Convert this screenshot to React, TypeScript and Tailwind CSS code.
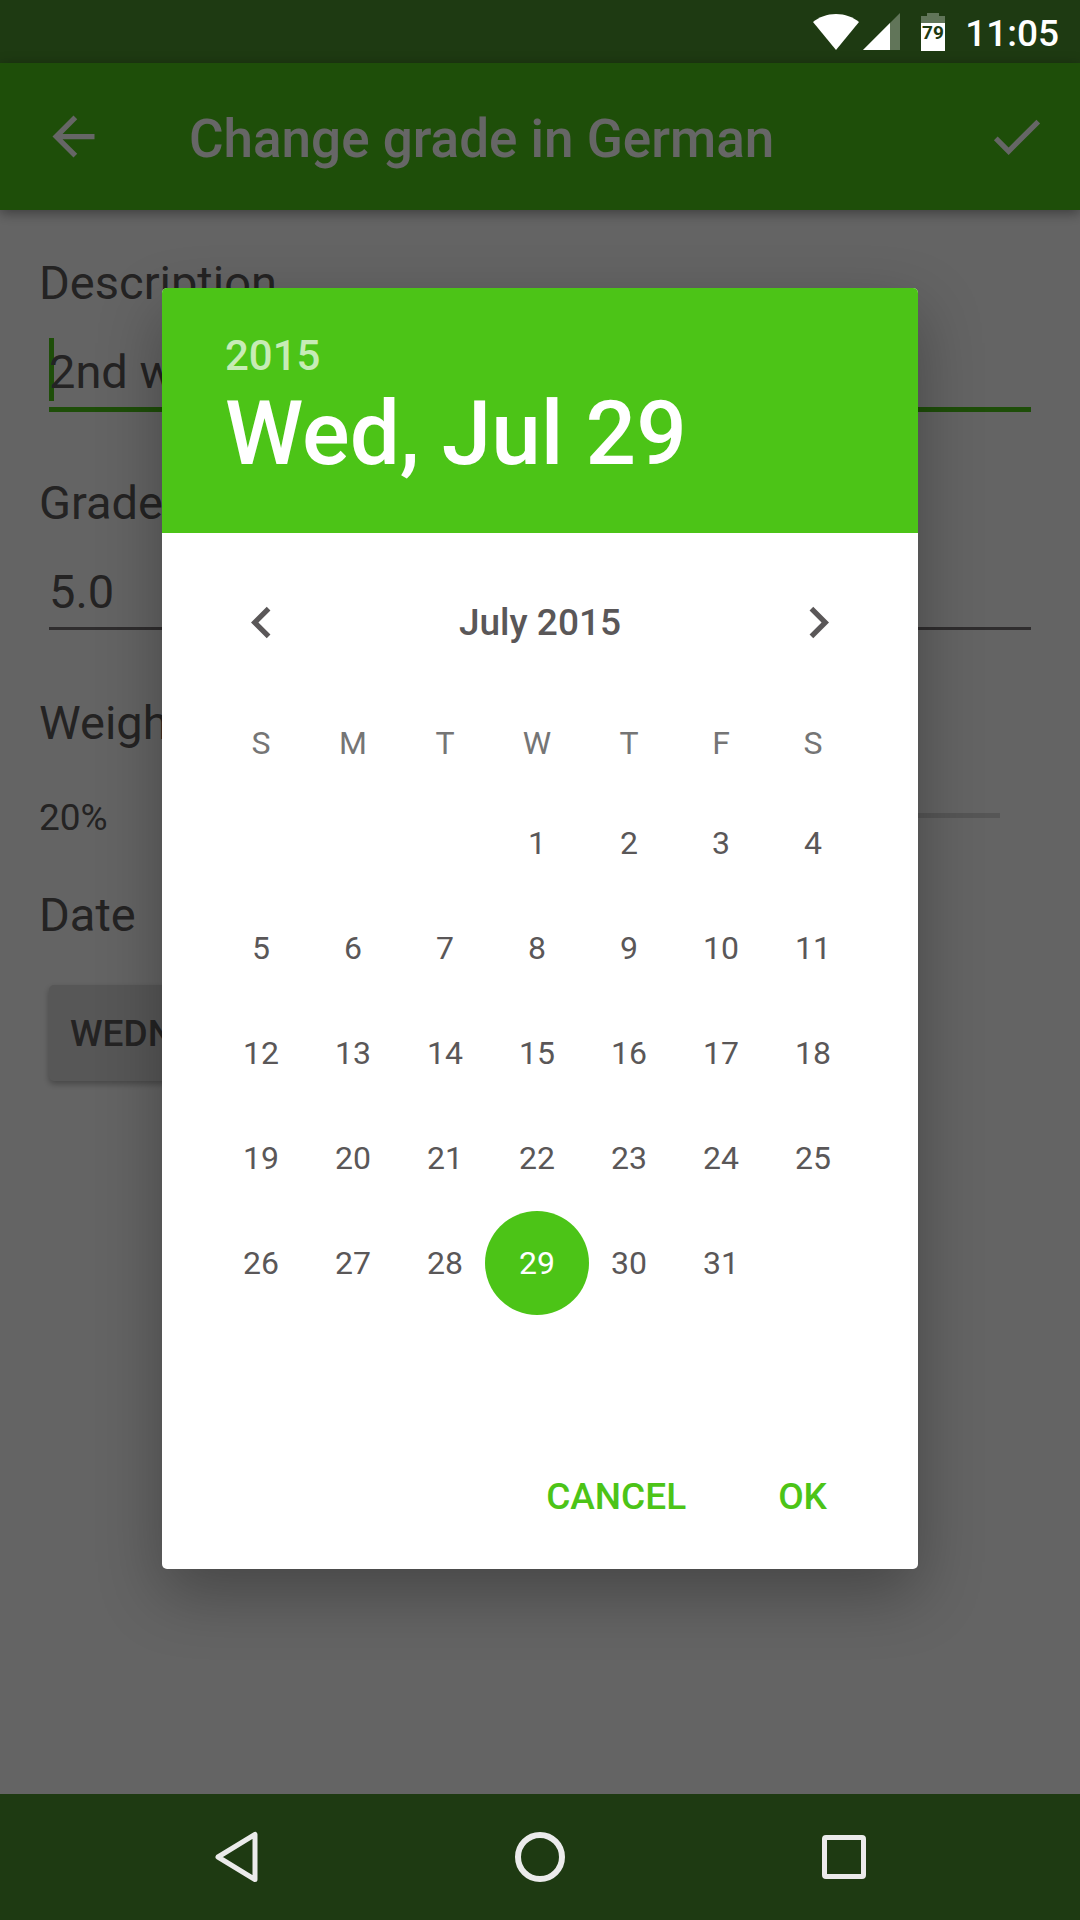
import React from "react";

const WEEKDAYS = ["S", "M", "T", "W", "T", "F", "S"];
const FIRST_WEEKDAY = 3;
const DAYS_IN_MONTH = 31;

const WEEKS: (number | null)[][] = Array.from({ length: 5 }, (_, week) =>
  Array.from({ length: 7 }, (_, weekday) => {
    const day = week * 7 + weekday - FIRST_WEEKDAY + 1;
    return day >= 1 && day <= DAYS_IN_MONTH ? day : null;
  })
);

function MaterialIcon({ d }: { d: string }) {
  return (
    <svg viewBox="0 0 24 24" className="size-[63px] fill-current" aria-hidden="true">
      <path d={d} />
    </svg>
  );
}

function StatusBar() {
  return (
    <div className="flex h-[63px] shrink-0 items-center justify-end bg-[#1e3a12] pr-[21px] text-white">
      <svg width="46" height="36" viewBox="0 0 46 36" className="mr-1" aria-label="Wi-Fi">
        <path d="M23 36 0 8C6 3 14 0 23 0s17 3 23 8z" fill="#fff" />
      </svg>
      <svg width="37" height="37" viewBox="0 0 37 37" className="mr-[21px]" aria-label="Signal">
        <path d="M37 0v37H0z" fill="#fff" fillOpacity=".3" />
        <path d="M27 10v27H0z" fill="#fff" />
      </svg>
      <svg width="24" height="38" viewBox="0 0 24 38" className="mr-5" aria-label="Battery">
        <path d="M6 0h12v3h6v7H0V3h6z" fill="#fff" fillOpacity=".3" />
        <path d="M0 10h24v28H0z" fill="#fff" />
        <text x="12" y="26" textAnchor="middle" fontSize="19" fontWeight="700" fill="#1e3a12">
          79
        </text>
      </svg>
      <time className="pt-1 text-[37px] leading-[44px] font-medium">11:05</time>
    </div>
  );
}

function AppBar() {
  return (
    <header className="relative flex h-[147px] shrink-0 items-center bg-[#4cc417] pr-8 pl-[42px] text-white shadow-[0_3px_12px_rgba(0,0,0,0.4)]">
      <button type="button" aria-label="Back">
        <MaterialIcon d="M20 11H7.83l5.59-5.59L12 4l-8 8 8 8 1.41-1.41L7.83 13H20v-2z" />
      </button>
      <h1 className="ml-[84px] flex-1 pt-1 text-[53px] leading-[64px] font-medium">
        Change grade in German
      </h1>
      <button type="button" aria-label="Save">
        <MaterialIcon d="M9 16.17 4.83 12l-1.42 1.41L9 19 21 7l-1.41-1.41z" />
      </button>
    </header>
  );
}

function GradeForm() {
  return (
    <main className="flex-1 px-[39px] pt-[45px] text-[47px] leading-[56px]">
      <label htmlFor="description" className="block">
        Description
      </label>
      <div className="relative mx-[10px] mt-[27px] mb-[63px] h-[74px]">
        <span className="absolute top-0 left-0 h-[63px] w-[5px] bg-[#4cc417]" />
        <input
          id="description"
          type="text"
          defaultValue="2nd written exam"
          className="relative block h-[74px] w-full border-b-[5px] border-[#4cc417] bg-transparent pb-0.5 outline-none"
        />
      </div>
      <label htmlFor="grade" className="block">
        Grade
      </label>
      <div className="mx-[10px] mt-[27px] mb-[63px] h-[74px]">
        <input
          id="grade"
          type="text"
          defaultValue="5.0"
          className="block h-[72px] w-full border-b-[3px] border-[#757273] bg-transparent pb-0.5 outline-none"
        />
      </div>
      <label htmlFor="weight" className="block">
        Weight
      </label>
      <div className="mt-[27px] mb-[35px] flex h-[74px] items-center gap-16 pr-[41px]">
        <output htmlFor="weight" className="pt-[6px] text-[37px] leading-[44px]">
          20%
        </output>
        <input
          id="weight"
          type="range"
          min={0}
          max={100}
          defaultValue={20}
          className="h-[5px] flex-1 appearance-none bg-[#d6d6d6] [&::-webkit-slider-thumb]:size-8 [&::-webkit-slider-thumb]:appearance-none [&::-webkit-slider-thumb]:rounded-full [&::-webkit-slider-thumb]:bg-[#4cc417]"
        />
      </div>
      <label htmlFor="date" className="block">
        Date
      </label>
      <button
        id="date"
        type="button"
        className="mx-[10px] mt-[42px] h-24 rounded-[5px] bg-[#d9d9d9] px-[21px] pt-0.5 text-[37px] leading-[44px] font-medium shadow-[0_3px_6px_rgba(0,0,0,0.3)]"
      >
        WEDNESDAY
      </button>
    </main>
  );
}

function DatePicker() {
  return (
    <section
      role="dialog"
      aria-label="Pick a date"
      className="w-[70%] overflow-hidden rounded-[5px] bg-white shadow-[0_24px_64px_rgba(0,0,0,0.3)]"
    >
      <div className="bg-[#4cc417] px-[63px] pt-11 pb-[47px] text-white">
        <button type="button" className="block text-[42px] leading-[48px] font-medium text-white/70">
          2015
        </button>
        <button type="button" className="mt-0.5 block text-[89px] leading-[104px] font-medium">
          Wed, Jul 29
        </button>
      </div>
      <div className="mx-[53px] mt-[41px] mb-[26px] flex h-24 items-center justify-between">
        <button type="button" aria-label="Previous month" className="flex h-24 w-[92px] items-center justify-center">
          <MaterialIcon d="M15.41 7.41 14 6l-6 6 6 6 1.41-1.41L10.83 12z" />
        </button>
        <h2 className="pt-0.5 text-[37px] leading-[44px] font-medium">July 2015</h2>
        <button type="button" aria-label="Next month" className="flex h-24 w-[92px] items-center justify-center">
          <MaterialIcon d="M10 6 8.59 7.41 13.17 12l-4.58 4.59L10 18l6-6z" />
        </button>
      </div>
      <div className="pr-[59px] pl-[53px]">
        <table className="w-full table-fixed text-center text-[32px] leading-[40px]">
          <thead>
            <tr className="h-[94px] text-[#757575]">
              {WEEKDAYS.map((name, i) => (
                <th key={i} scope="col" className="p-0 font-normal">
                  {name}
                </th>
              ))}
            </tr>
          </thead>
          <tbody>
            {WEEKS.map((week, i) => (
              <tr key={i} className="h-[105px]">
                {week.map((day, j) => (
                  <td key={j} className="p-0">
                    {day !== null && (
                      <div className="-mx-[6px] flex justify-center">
                        <button
                          type="button"
                          aria-pressed={day === 29}
                          className={
                            day === 29
                              ? "size-[104px] rounded-full bg-[#4cc417] text-white"
                              : "size-[92px] rounded-full"
                          }
                        >
                          {day}
                        </button>
                      </div>
                    )}
                  </td>
                ))}
              </tr>
            ))}
          </tbody>
        </table>
      </div>
      <div className="mt-[133px] flex justify-end gap-[50px] pr-[70px] pb-[25px] text-[37px] leading-[44px] font-medium text-[#4cc417]">
        <button type="button" className="h-24 px-[21px] pt-0.5">
          CANCEL
        </button>
        <button type="button" className="h-24 px-[21px] pt-0.5">
          OK
        </button>
      </div>
    </section>
  );
}

function NavigationBar() {
  return (
    <nav className="grid h-[126px] shrink-0 grid-cols-3 bg-[#1e3a12] px-[84px]">
      <button type="button" aria-label="Back" className="flex items-center justify-center">
        <svg width="50" height="56" viewBox="0 0 50 56" fill="none" stroke="#ebebeb" strokeWidth="5" strokeLinejoin="round">
          <path d="M44 5.500v45L7 28z" />
        </svg>
      </button>
      <button type="button" aria-label="Home" className="flex items-center justify-center">
        <svg width="56" height="56" viewBox="0 0 56 56" fill="none" stroke="#ebebeb" strokeWidth="6">
          <circle cx="28" cy="28" r="22" />
        </svg>
      </button>
      <button type="button" aria-label="Overview" className="flex items-center justify-center">
        <svg width="56" height="56" viewBox="0 0 56 56" fill="none" stroke="#ebebeb" strokeWidth="5" strokeLinejoin="round">
          <rect x="8.5" y="8.5" width="39" height="39" rx="1.500" />
        </svg>
      </button>
    </nav>
  );
}

export default function App() {
  return (
    <div className="flex min-h-screen flex-col overflow-hidden bg-[#fafafa] font-[Roboto,sans-serif] text-[#5a5758]">
      <StatusBar />
      <div className="relative flex flex-1 flex-col">
        <AppBar />
        <GradeForm />
        <div className="absolute inset-0 flex items-center justify-center bg-black/60">
          <DatePicker />
        </div>
      </div>
      <NavigationBar />
    </div>
  );
}
